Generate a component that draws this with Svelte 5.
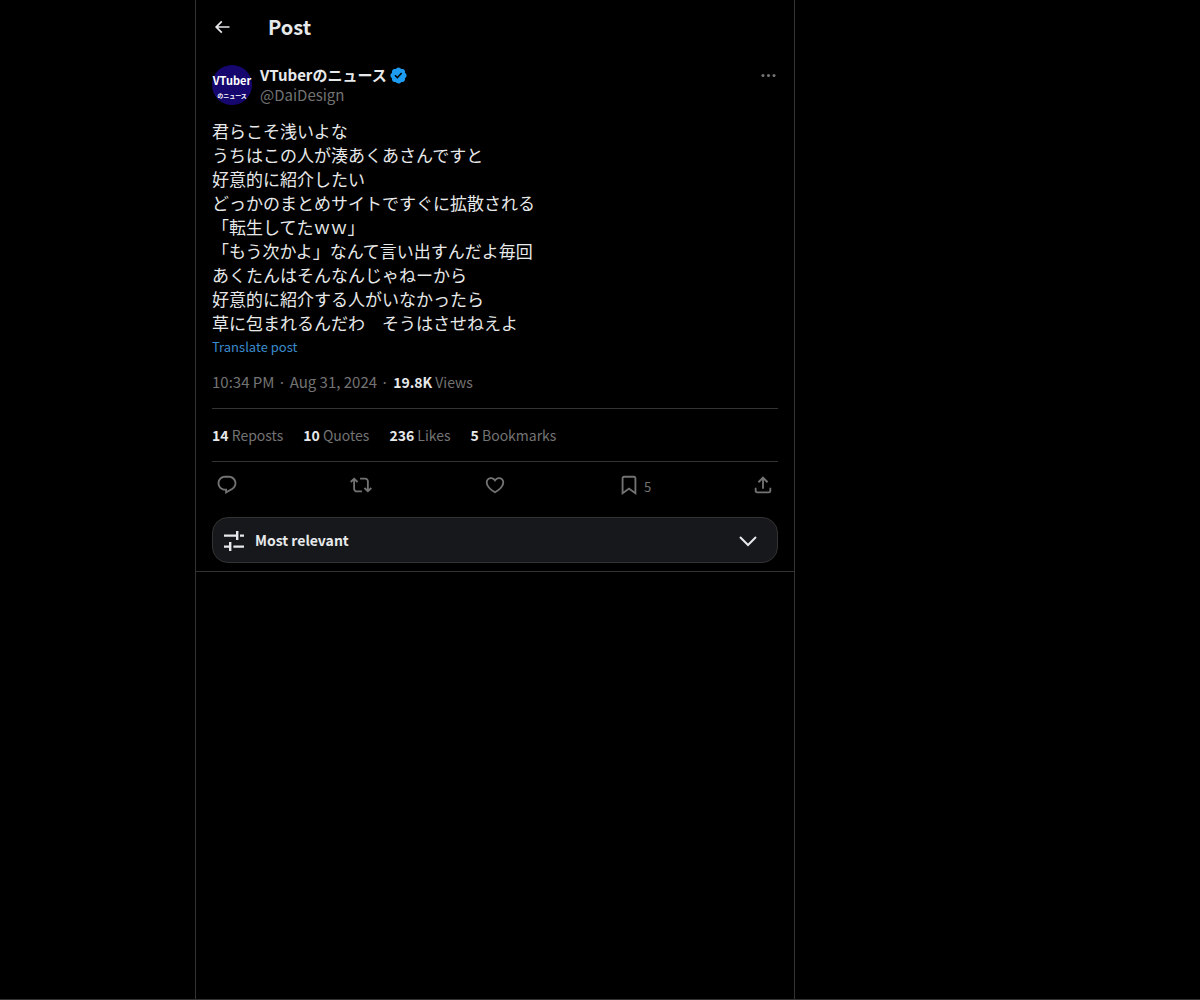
<script>
  const lines = [
    '君らこそ浅いよな',
    'うちはこの人が湊あくあさんですと',
    '好意的に紹介したい',
    'どっかのまとめサイトですぐに拡散される',
    '「転生してたｗｗ」',
    '「もう次かよ」なんて言い出すんだよ毎回',
    'あくたんはそんなんじゃねーから',
    '好意的に紹介する人がいなかったら',
    '草に包まれるんだわ　そうはさせねえよ'
  ];

  const stats = [
    { count: '14', label: 'Reposts' },
    { count: '10', label: 'Quotes' },
    { count: '236', label: 'Likes' },
    { count: '5', label: 'Bookmarks' }
  ];

  const actions = [
    {
      name: 'Reply',
      path: 'M1.751 10c0-4.42 3.584-8 8.005-8h4.366c4.49 0 8.129 3.64 8.129 8.13 0 2.96-1.607 5.68-4.196 7.11l-8.054 4.46v-3.69h-.067c-4.49.1-8.183-3.51-8.183-8.01zm8.005-6c-3.317 0-6.005 2.69-6.005 6 0 3.37 2.77 6.08 6.138 6.01l.351-.01h1.761v2.3l5.087-2.81c1.951-1.08 3.163-3.13 3.163-5.36 0-3.39-2.744-6.13-6.129-6.13H9.756z'
    },
    {
      name: 'Repost',
      path: 'M4.5 3.88l4.432 4.14-1.364 1.46L5.5 7.55V16c0 1.1.896 2 2 2H13v2H7.5c-2.209 0-4-1.79-4-4V7.55L1.432 9.48.068 8.02 4.5 3.88zM16.5 6H11V4h5.5c2.209 0 4 1.79 4 4v8.45l2.068-1.93 1.364 1.46-4.432 4.14-4.432-4.14 1.364-1.46 2.068 1.93V8c0-1.1-.896-2-2-2z'
    },
    {
      name: 'Like',
      path: 'M16.697 5.5c-1.222-.06-2.679.51-3.89 2.16l-.805 1.09-.806-1.09C9.984 6.01 8.526 5.44 7.304 5.5c-1.243.07-2.349.78-2.91 1.91-.552 1.12-.633 2.78.479 4.82 1.074 1.97 3.257 4.27 7.129 6.61 3.87-2.34 6.052-4.64 7.126-6.61 1.111-2.04 1.03-3.7.477-4.82-.561-1.13-1.666-1.84-2.908-1.91zm4.187 7.69c-1.351 2.48-4.001 5.12-8.379 7.67l-.503.3-.504-.3c-4.379-2.55-7.029-5.19-8.382-7.67-1.36-2.5-1.41-4.86-.514-6.67.887-1.79 2.647-2.91 4.601-3.01 1.651-.09 3.368.56 4.798 2.01 1.429-1.45 3.146-2.1 4.796-2.01 1.954.1 3.714 1.22 4.601 3.01.896 1.81.846 4.17-.514 6.67z'
    },
    {
      name: 'Bookmark',
      count: '5',
      path: 'M4 4.5C4 3.12 5.119 2 6.5 2h11C18.881 2 20 3.12 20 4.5v18.44l-8-5.71-8 5.71V4.5zM6.5 4c-.276 0-.5.22-.5.5v14.56l6-4.29 6 4.29V4.5c0-.28-.224-.5-.5-.5h-11z'
    },
    {
      name: 'Share',
      path: 'M12 2.59l5.7 5.7-1.41 1.42L13 6.41V16h-2V6.41l-3.3 3.3-1.41-1.42L12 2.59zM21 15l-.02 3.51c0 1.38-1.12 2.49-2.5 2.49H5.5C4.11 21 3 19.88 3 18.5V15h2v3.5c0 .28.22.5.5.5h12.98c.28 0 .5-.22.5-.5L19 15h2z'
    }
  ];

  let sort = $state('relevant');
</script>

<div class="page">
  <main class="column">
    <header class="topbar">
      <button class="icon_button" aria-label="Back">
        <svg class="icon_back" viewBox="0 0 24 24"><path d="M7.414 13l5.043 5.04-1.414 1.42L3.586 12l7.457-7.46 1.414 1.42L7.414 11H21v2H7.414z" /></svg>
      </button>
      <h1>Post</h1>
    </header>

    <article class="post">
      <div class="author">
        <svg class="avatar" viewBox="0 0 40 40" aria-hidden="true">
          <circle cx="20" cy="20" r="20" />
          <text class="avatar_latin" x="20" y="20">VTuber</text>
          <text class="avatar_kana" x="20" y="33">のニュース</text>
        </svg>
        <div class="names">
          <div class="name">
            <a href="#profile">VTuberのニュース</a>
            <svg class="verified" viewBox="0 0 22 22" aria-label="Verified account"><path d="M20.396 11c-.018-.646-.215-1.275-.57-1.816-.354-.54-.852-.972-1.438-1.246.223-.607.27-1.264.14-1.897-.131-.634-.437-1.218-.882-1.687-.47-.445-1.053-.75-1.687-.882-.633-.13-1.29-.083-1.897.14-.273-.587-.704-1.086-1.245-1.44S11.647 1.62 11 1.604c-.646.017-1.273.213-1.813.568s-.969.854-1.24 1.44c-.608-.223-1.267-.272-1.902-.14-.635.13-1.22.436-1.69.882-.445.47-.749 1.055-.878 1.688-.13.633-.08 1.29.144 1.896-.587.274-1.087.705-1.443 1.245-.356.54-.555 1.17-.574 1.817.02.647.218 1.276.574 1.817.356.54.856.972 1.443 1.245-.224.606-.274 1.263-.144 1.896.13.634.433 1.218.877 1.688.47.443 1.054.747 1.687.878.633.132 1.29.084 1.897-.136.274.586.705 1.084 1.246 1.439.54.354 1.17.551 1.816.569.647-.016 1.276-.213 1.817-.567s.972-.854 1.245-1.44c.604.239 1.266.296 1.903.164.636-.132 1.22-.447 1.68-.907.46-.46.776-1.044.908-1.681s.075-1.299-.165-1.903c.586-.274 1.084-.705 1.439-1.246.354-.54.551-1.17.569-1.816zM9.662 14.85l-3.429-3.428 1.293-1.302 2.072 2.072 4.4-4.794 1.347 1.246z" /></svg>
          </div>
          <a class="handle" href="#profile">@DaiDesign</a>
        </div>
        <button class="icon_button more" aria-label="More">
          <svg class="icon_more" viewBox="0 0 24 24"><path d="M3 12c0-1.1.9-2 2-2s2 .9 2 2-.9 2-2 2-2-.9-2-2zm9 2c1.1 0 2-.9 2-2s-.9-2-2-2-2 .9-2 2 .9 2 2 2zm7 0c1.1 0 2-.9 2-2s-.9-2-2-2-2 .9-2 2 .9 2 2 2z" /></svg>
        </button>
      </div>

      <div class="body" lang="ja">
        {#each lines as line}
          <p>{line}</p>
        {/each}
      </div>
      <button class="translate">Translate post</button>

      <div class="meta">
        <a href="#status">10:34 PM · Aug 31, 2024</a> · <span class="views"><strong>19.8K</strong> Views</span>
      </div>

      <div class="stats">
        {#each stats as stat}
          <a href="#stats"><strong>{stat.count}</strong> {stat.label}</a>
        {/each}
      </div>

      <div class="actions">
        {#each actions as action}
          <div class="action">
            <button class="icon_button" aria-label={action.name}>
              <svg class="icon_action" viewBox="0 0 24 24"><path d={action.path} /></svg>
              {#if action.count}
                <span class="count">{action.count}</span>
              {/if}
            </button>
          </div>
        {/each}
      </div>

      <div class="sort">
        <svg class="sort_icon" viewBox="0 0 22 22" aria-hidden="true"><path d="M1 4.4h12V1h2.4v9H13V6.8H1zM17 4.4h4v2.4h-4zM1 15.4h5V12h2.4v9H6v-3.2H1zM10.4 15.4H21v2.4H10.4z" /></svg>
        <select aria-label="Sort replies" bind:value={sort}>
          <option value="relevant">Most relevant</option>
          <option value="recent">Most recent</option>
          <option value="liked">Most liked</option>
        </select>
        <svg class="sort_arrow" viewBox="0 0 20 12" aria-hidden="true"><path d="M2 2l8 8 8-8" /></svg>
      </div>
    </article>
  </main>
</div>

<style>
  :global(body) {
    background: #000;
  }

  .page {
    display: grid;
    grid-template-columns: 13fr 40fr 27fr;
    min-height: 100vh;
    box-sizing: border-box;
    border-bottom: 1px solid #333;
    color: #e7e9ea;
    font-family: "Noto Sans CJK JP", sans-serif;
    font-size: 15px;
    line-height: 20px;
  }

  .column {
    grid-column: 2;
    min-width: 0;
    border: solid #333;
    border-width: 0 1px;
  }

  a {
    color: inherit;
    text-decoration: none;
  }

  svg {
    display: block;
    fill: currentColor;
  }

  .icon_button {
    display: flex;
    align-items: center;
    padding: 0;
    border: 0;
    background: none;
    color: inherit;
    font: inherit;
    cursor: pointer;
  }

  .topbar {
    display: flex;
    align-items: center;
    gap: 36px;
    height: 53px;
    padding: 0 16px;
  }

  .icon_back {
    width: 20px;
    height: 20px;
  }

  h1 {
    margin: 0;
    font-size: 20px;
    font-weight: 700;
    line-height: 24px;
  }

  .post {
    padding: 12px 16px 8px;
    border-bottom: 1px solid #333;
  }

  .author {
    display: flex;
    gap: 8px;
  }

  .avatar {
    width: 40px;
    height: 40px;
  }

  .avatar circle {
    fill: #15076e;
  }

  .avatar text {
    fill: #fff;
    font-weight: 700;
    text-anchor: middle;
  }

  .avatar_latin {
    font-size: 11px;
  }

  .avatar_kana {
    font-size: 6px;
  }

  .names {
    flex: 1;
    min-width: 0;
  }

  .name {
    display: flex;
    align-items: center;
    gap: 2px;
    font-weight: 700;
  }

  .verified {
    width: 19px;
    height: 19px;
    color: #1d9bf0;
  }

  .handle,
  .more,
  .meta,
  .stats,
  .actions {
    color: #737373;
  }

  .more {
    height: 20px;
  }

  .icon_more {
    width: 19px;
    height: 19px;
  }

  .body {
    margin-top: 14px;
    font-size: 17px;
    line-height: 24px;
  }

  .body p {
    margin: 0;
  }

  .translate {
    display: block;
    padding: 0;
    border: 0;
    background: none;
    color: #3a8bcd;
    font-family: inherit;
    font-size: 13px;
    line-height: 24px;
    cursor: pointer;
  }

  .meta {
    padding: 13px 0 16px;
  }

  .views {
    margin-left: 1px;
    font-size: 14px;
  }

  strong {
    color: #e7e9ea;
    font-weight: 700;
  }

  .stats {
    display: flex;
    flex-wrap: wrap;
    gap: 20px;
    padding: 16px 0;
    border: solid #333;
    border-width: 1px 0;
    font-size: 14px;
  }

  .actions {
    display: flex;
    height: 46px;
    padding: 0 4px;
  }

  .action {
    display: flex;
    flex: 1;
  }

  .action:last-child {
    flex: none;
  }

  .icon_action {
    width: 22px;
    height: 22px;
  }

  .count {
    padding: 3px 0 0 4px;
    font-size: 13px;
  }

  .sort {
    position: relative;
    margin-top: 9px;
  }

  .sort select {
    display: block;
    width: 100%;
    height: 46px;
    padding: 0 42px;
    border: 1px solid #333;
    border-radius: 16px;
    background: #16181c;
    color: #e7e9ea;
    font: inherit;
    font-size: 14px;
    font-weight: 700;
    appearance: none;
    cursor: pointer;
  }

  .sort_icon,
  .sort_arrow {
    position: absolute;
    pointer-events: none;
  }

  .sort_icon {
    top: 13px;
    left: 11px;
    width: 22px;
    height: 22px;
  }

  .sort_arrow {
    top: 18px;
    right: 20px;
    width: 20px;
    height: 12px;
    fill: none;
    stroke: currentColor;
    stroke-width: 2;
  }
</style>
